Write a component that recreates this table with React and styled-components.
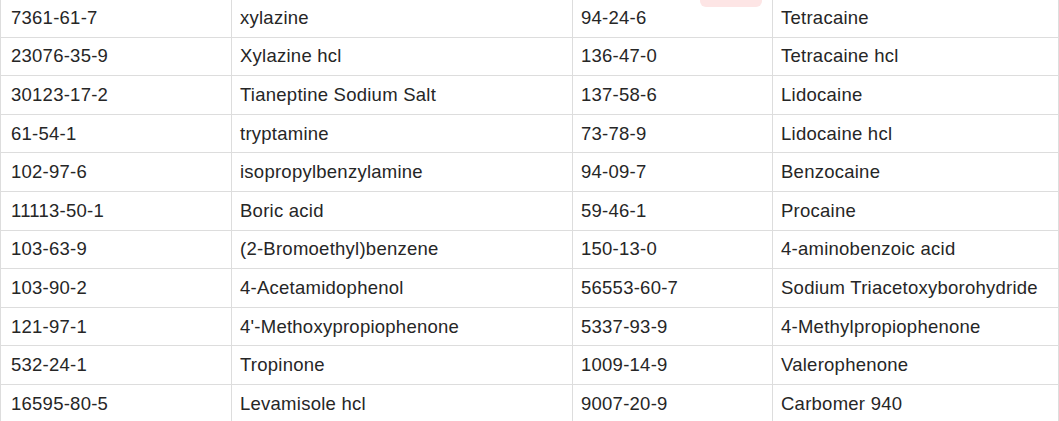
import React from 'react';
import styled, { createGlobalStyle } from 'styled-components';

const GlobalStyle = createGlobalStyle`
  html, body {
    margin: 0;
    padding: 0;
    background: #fff;
    overflow: hidden;
  }
  body {
    font-family: "Liberation Sans", Arial, sans-serif;
    color: #2b2b2b;
  }
`;

const Wrapper = styled.div`
  position: relative;
  width: 1059px;
  height: 421px;
  overflow: hidden;
`;

const Table = styled.table`
  width: 1058px;
  margin-top: -2px;
  border-collapse: collapse;
  table-layout: fixed;
  border: 1px solid #ddd;
`;

const Col = styled.col`
  width: ${props => props.$w}px;
`;

const Row = styled.tr`
  height: 38.6px;
`;

const Cell = styled.td`
  border: 1px solid #ddd;
  padding: 0 0 0 ${props => (props.$first ? '10px' : '8px')};
  font-size: 18.5px;
  letter-spacing: 0.25px;
  line-height: 20px;
  vertical-align: middle;
  white-space: nowrap;
  overflow: hidden;
  color: #262626;
`;

const HotBadge = styled.div`
  position: absolute;
  top: -8px;
  left: 700px;
  width: 62px;
  height: 15px;
  border-radius: 6px;
  background: #fde5e5;
`;

const widths = [231, 341, 200, 286];

const rows = [
  ['7361-61-7', 'xylazine', '94-24-6', 'Tetracaine'],
  ['23076-35-9', 'Xylazine hcl', '136-47-0', 'Tetracaine hcl'],
  ['30123-17-2', 'Tianeptine Sodium Salt', '137-58-6', 'Lidocaine'],
  ['61-54-1', 'tryptamine', '73-78-9', 'Lidocaine hcl'],
  ['102-97-6', 'isopropylbenzylamine', '94-09-7', 'Benzocaine'],
  ['11113-50-1', 'Boric acid', '59-46-1', 'Procaine'],
  ['103-63-9', '(2-Bromoethyl)benzene', '150-13-0', '4-aminobenzoic acid'],
  ['103-90-2', '4-Acetamidophenol', '56553-60-7', 'Sodium Triacetoxyborohydride'],
  ['121-97-1', "4'-Methoxypropiophenone", '5337-93-9', '4-Methylpropiophenone'],
  ['532-24-1', 'Tropinone', '1009-14-9', 'Valerophenone'],
  ['16595-80-5', 'Levamisole hcl', '9007-20-9', 'Carbomer 940'],
];

const App = () => {
  return (
    <>
      <GlobalStyle />
      <Wrapper>
        <Table>
          <colgroup>
            {widths.map((w, i) => (
              <Col key={i} $w={w} />
            ))}
          </colgroup>
          <tbody>
            {rows.map(r => (
              <Row key={r[0]}>
                {r.map((v, i) => (
                  <Cell key={i} $first={i === 0}>
                    {v}
                  </Cell>
                ))}
              </Row>
            ))}
          </tbody>
        </Table>
        <HotBadge />
      </Wrapper>
    </>
  );
};

export default App;
